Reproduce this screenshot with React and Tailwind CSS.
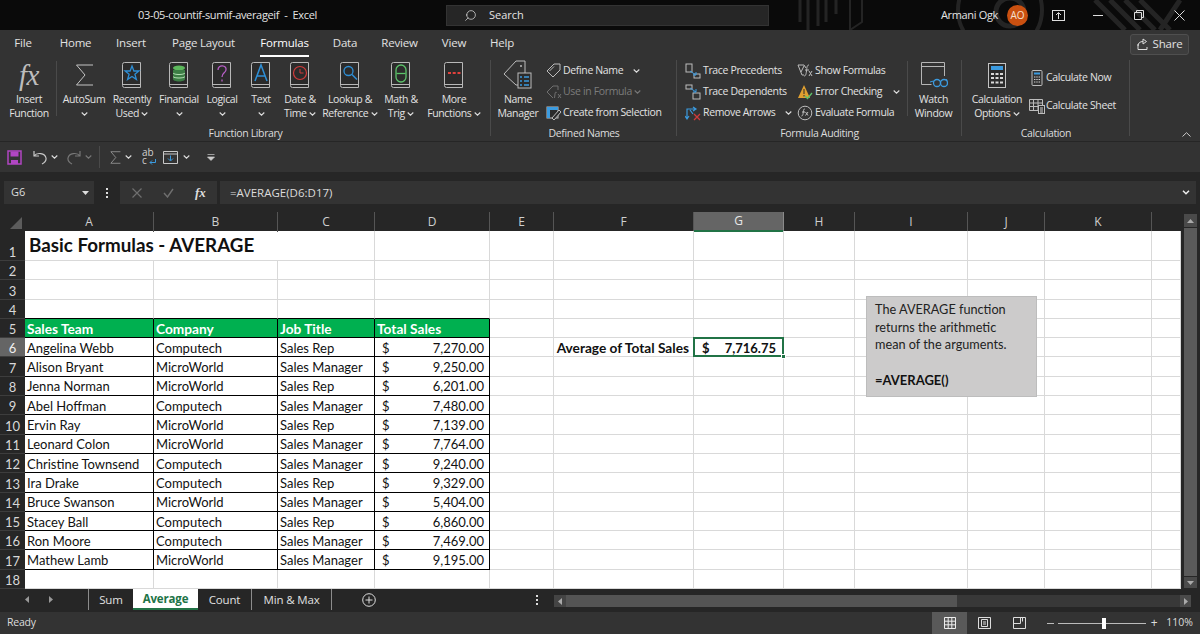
import React from "react";
import { Search } from "lucide-react";

const uiFont = "font-['Open_Sans',sans-serif]";
const cellFont = "font-['Lato',sans-serif]";

const COLUMNS = ["A", "B", "C", "D", "E", "F", "G", "H", "I", "J", "K", ""];

const salesRows = [
  ["Angelina Webb", "Computech", "Sales Rep", "7,270.00"],
  ["Alison Bryant", "MicroWorld", "Sales Manager", "9,250.00"],
  ["Jenna Norman", "MicroWorld", "Sales Rep", "6,201.00"],
  ["Abel Hoffman", "Computech", "Sales Manager", "7,480.00"],
  ["Ervin Ray", "MicroWorld", "Sales Rep", "7,139.00"],
  ["Leonard Colon", "MicroWorld", "Sales Manager", "7,764.00"],
  ["Christine Townsend", "Computech", "Sales Manager", "9,240.00"],
  ["Ira Drake", "Computech", "Sales Rep", "9,329.00"],
  ["Bruce Swanson", "MicroWorld", "Sales Manager", "5,404.00"],
  ["Stacey Ball", "Computech", "Sales Rep", "6,860.00"],
  ["Ron Moore", "Computech", "Sales Manager", "7,469.00"],
  ["Mathew Lamb", "MicroWorld", "Sales Manager", "9,195.00"],
];

const ribbonTabs = [
  ["File", "w-[46px]"],
  ["Home", "w-[59px]"],
  ["Insert", "w-[52px]"],
  ["Page Layout", "w-[93px]"],
  ["Formulas", "w-[69px]"],
  ["Data", "w-[52px]"],
  ["Review", "w-[57px]"],
  ["View", "w-[52px]"],
  ["Help", "w-[44px]"],
];

function Chev({ dim }) {
  return (
    <svg width="7" height="4" viewBox="0 0 7 4" className="inline-block align-middle">
      <path d="M.7.5 3.5 3.2 6.3.5" fill="none" stroke={dim ? "#777" : "#ddd"} strokeWidth="1.1" />
    </svg>
  );
}

function Sigma({ w = 19, h = 22, color = "#c4c4c4" }) {
  return (
    <svg width={w} height={h} viewBox="0 0 19 22">
      <path d="M18 1H1.5L10 11 1.5 21H18" fill="none" stroke={color} strokeWidth="1" />
    </svg>
  );
}

// book shape shared by the function library buttons
function Book({ children }) {
  return (
    <svg width="20" height="26" viewBox="0 0 20 26">
      <path d="M2.5.5h16v25h-16a2 2 0 0 1-2-2v-21a2 2 0 0 1 2-2Z" fill="#2b2b2b" stroke="#b8b8b8" />
      <path d="M1 22.5h17.5" stroke="#b8b8b8" />
      {children}
    </svg>
  );
}

function BigIcon({ name }) {
  if (name === "sum") return <Sigma />;
  if (name === "fx") {
    return <span className="font-['Liberation_Serif',serif] text-[29px] italic leading-[30px] text-[#bdbdbd]">fx</span>;
  }
  if (name === "star") {
    return <Book><path d="m10 4 1.9 5h5l-4 3.2 1.5 5.2L10 14.500 5.600 17.400l1.500-5.200-4-3.200h5z" fill="none" stroke="#2e8fd6" strokeWidth="1.3" /></Book>;
  }
  if (name === "money") {
    return (
      <Book>
        <ellipse cx="10" cy="6" rx="6" ry="2.500" fill="#5cb85c" />
        <path d="M4 8v9c0 1.500 2.700 2.500 6 2.500s6-1 6-2.500V8" fill="#3c7d45" />
        <path d="M4 11c1 2 11 2 12 0M4 14.500c1 2 11 2 12 0" fill="none" stroke="#b5e0b5" />
      </Book>
    );
  }
  if (name === "question") {
    return <Book><path d="M6 8c0-6 9-5 8 0-.5 3-4 3-4 7M10 17.500v2" fill="none" stroke="#b65fc6" strokeWidth="1.300" /></Book>;
  }
  if (name === "a") {
    return <Book><path d="M4 19 10 3l6 16M6 14h8" fill="none" stroke="#2e8fd6" strokeWidth="1.500" /></Book>;
  }
  if (name === "clock") {
    return <Book><circle cx="10" cy="11" r="6.500" fill="none" stroke="#d13b3b" strokeWidth="1.200" /><path d="M10 7v4h3.500" fill="none" stroke="#d13b3b" /></Book>;
  }
  if (name === "lookup") {
    return <Book><circle cx="8.500" cy="9" r="4.500" fill="none" stroke="#2e8fd6" strokeWidth="1.300" /><path d="m12 12.500 5 5" stroke="#2e8fd6" strokeWidth="1.500" /></Book>;
  }
  if (name === "theta") {
    return <Book><rect x="5" y="3" width="10" height="17" rx="5" fill="none" stroke="#5cc26a" strokeWidth="1.300" /><path d="M5.500 11.500h9" stroke="#5cc26a" strokeWidth="1.300" /></Book>;
  }
  if (name === "dots") {
    return <Book><path d="M4 11h3M8.700 11h3M13.500 11h3" stroke="#e0413c" strokeWidth="2" /></Book>;
  }
  if (name === "name") {
    return (
      <svg width="30" height="30" viewBox="0 0 30 30">
        <path d="M1 14 13 1h9v24h-9Z" fill="none" stroke="#bdbdbd" />
        <circle cx="18" cy="6" r="1" fill="#bdbdbd" />
        <rect x="15" y="13" width="13" height="15" fill="#2b2b2b" stroke="#bdbdbd" />
        <path d="M17 17h2M21 17h5M17 21h2M21 21h5M17 25h2M21 25h5" stroke="#3b9be0" strokeWidth="1.500" />
      </svg>
    );
  }
  if (name === "watch") {
    return (
      <svg width="28" height="28" viewBox="0 0 28 28">
        <path d="M24.500 15V1.500h-23v22h10M1.500 5.500h23" fill="none" stroke="#b5b5b5" />
        <circle cx="17" cy="22" r="3.500" fill="none" stroke="#3b9be0" strokeWidth="1.300" />
        <circle cx="24" cy="22" r="3.500" fill="none" stroke="#3b9be0" strokeWidth="1.300" />
        <path d="M10 21l3.500-1M27 20l-.5-2" stroke="#3b9be0" />
      </svg>
    );
  }
  if (name === "calc") {
    return (
      <svg width="18" height="25" viewBox="0 0 18 25">
        <rect x=".5" y=".5" width="17" height="24" fill="#2b2b2b" stroke="#c4c4c4" />
        <rect x="3" y="3" width="12" height="4" fill="#3b9be0" />
        <path d="M3 11h3M7.500 11h3M12 11h3M3 15h3M7.500 15h3M12 15h3M3 19.500h3M7.500 19.500h3M12 19.500h3" stroke="#d8d8d8" strokeWidth="2" />
      </svg>
    );
  }
  return null;
}

function SmallIcon({ name }) {
  const line = "#bdbdbd";
  const blue = "#3b9be0";
  const parts = {
    tag: <path d="M1 8 8 1h6v6l-7 7ZM3.500 8 8 3.500" fill="none" stroke={line} />,
    tagDim: (
      <>
        <path d="M1 8 7 2h5v4M1 8l6 6" fill="none" stroke="#707070" />
        <path d="M10 9c1-1.500-1-1.500-1 1l-.5 4M12 10l3 4m0-4-3 4" fill="none" stroke="#707070" />
      </>
    ),
    create: (
      <>
        <rect x="1" y="2" width="11" height="11" fill="#2b2b2b" stroke={line} />
        <path d="M1 2h11v3H1zM1 5h3v8H1z" fill={blue} />
        <path d="M6 13l7-8 2 2-7 8Z" fill="#2b2b2b" stroke={line} />
      </>
    ),
    prec: (
      <>
        <rect x="1" y="1" width="6" height="8" fill="none" stroke={line} />
        <rect x="9" y="11" width="6" height="4" fill="none" stroke={line} />
        <path d="M5 8l6 4M11 9v3H8" fill="none" stroke={blue} />
      </>
    ),
    dep: (
      <>
        <rect x="1" y="1" width="6" height="4" fill="none" stroke={line} />
        <rect x="8" y="9" width="7" height="6" fill="none" stroke={line} />
        <path d="M5 4l6 4M11 5v3H8" fill="none" stroke={blue} />
      </>
    ),
    arrows: (
      <>
        <path d="M2 14V4h8M8 2l3 2-3 2M0 11l2 3 2-3M5 5l3 4" fill="none" stroke={blue} strokeWidth="1.200" />
        <path d="m9 9 6 6m0-6-6 6" stroke="#d13b3b" strokeWidth="1.300" />
      </>
    ),
    show: (
      <>
        <path d="M1 2h6l2 3M1 2l4 10h2M7 3 4 9" fill="none" stroke={line} />
        <path d="M12 2c-2 0-2 2-2.500 6-.5 4-1 5-2.500 5M8 7h4M12 8l3 5m0-5-3 5" fill="none" stroke={line} />
      </>
    ),
    error: (
      <>
        <path d="M7 1 1 14h12Z" fill="#e0a030" />
        <path d="M7 5v5M7 11v1.500" stroke="#2b2b2b" />
        <path d="m8 12 2.500 2.500L15 9" fill="none" stroke="#5cc26a" strokeWidth="1.300" />
      </>
    ),
    evaluate: (
      <>
        <circle cx="8" cy="8" r="6.800" fill="none" stroke={line} />
        <path d="M8 4c-1-.5-1.500 1-1.700 3-.2 2-.5 4-1.800 4M5 7h3M8.500 7l2.500 3.500m0-3.500-2.500 3.500" fill="none" stroke={line} />
      </>
    ),
    calcNow: (
      <>
        <rect x="3" y=".5" width="10" height="15" rx="1" fill="none" stroke={line} />
        <rect x="5" y="2.500" width="6" height="2" fill={blue} />
        <path d="M5 7h6M5 9.500h6M5 12h6" stroke="#d0d0d0" strokeDasharray="1.400 .9" />
      </>
    ),
    calcSheet: (
      <>
        <path d="M.5 1.500h13v11H.5ZM.5 5h13M.5 8.500h13M4.500 1.500v11M9 1.500v11" fill="none" stroke={line} />
        <rect x="9.500" y="7.500" width="6" height="8" fill="#2b2b2b" stroke={line} />
        <path d="M11 10h3M11 12h3M11 14h3" stroke="#d0d0d0" />
      </>
    ),
  };
  return (
    <svg width="16" height="16" viewBox="0 0 16 16" className="shrink-0">
      {parts[name]}
    </svg>
  );
}

function BigButton({ icon, lines, width }) {
  return (
    <div className={`flex h-full shrink-0 flex-col items-center text-center ${width}`}>
      <div className="flex h-[34px] items-center justify-center">
        <BigIcon name={icon} />
      </div>
      <div className="whitespace-nowrap leading-[14px]">{lines[0]}</div>
      <div className="whitespace-nowrap leading-[14px]">
        {lines[1]} {lines[2] && <Chev />}
      </div>
    </div>
  );
}

function SmallButton({ icon, label, dim, chev, tight }) {
  return (
    <div className={`flex h-[21px] items-center whitespace-nowrap ${tight ? "gap-[1px]" : "gap-[2px]"} ${dim ? "text-[#7c7c7c]" : ""}`}>
      <SmallIcon name={icon} />
      <span>{label}</span>
      {chev}
    </div>
  );
}

function Group({ label, width, children, last }) {
  return (
    <div className={`relative flex h-full shrink-0 flex-col ${width}`}>
      <div className="flex h-[68px]">{children}</div>
      <div className="text-center leading-[14px] text-[#dcdcdc]">{label}</div>
      {!last && <span className="absolute bottom-[5px] right-0 top-[2px] w-px bg-[#4a4a4a]" />}
    </div>
  );
}

function VSep() {
  return <div className="mt-[3px] h-[55px] w-px shrink-0 bg-[#4a4a4a]" />;
}

function Ribbon() {
  return (
    <div className={`flex h-[83px] bg-[#333333] text-[10.500px] tracking-[-0.35px] text-[#e2e2e2] ${uiFont}`}>
      <Group label="Function Library" width="w-[491px]">
        <BigButton icon="fx" lines={["Insert", "Function"]} width="w-[56px] pl-[2px]" />
        <VSep />
        <div className="w-[3px] shrink-0" />
        <BigButton icon="sum" lines={["AutoSum", <Chev key="c" />]} width="w-[48px]" />
        <BigButton icon="star" lines={["Recently", "Used", true]} width="w-[48px]" />
        <BigButton icon="money" lines={["Financial", <Chev key="c" />]} width="w-[46px]" />
        <BigButton icon="question" lines={["Logical", <Chev key="c" />]} width="w-[40px]" />
        <BigButton icon="a" lines={["Text", <Chev key="c" />]} width="w-[38px]" />
        <BigButton icon="clock" lines={["Date &", "Time", true]} width="w-[40px]" />
        <BigButton icon="lookup" lines={["Lookup &", "Reference", true]} width="w-[60px]" />
        <BigButton icon="theta" lines={["Math &", "Trig", true]} width="w-[42px]" />
        <BigButton icon="dots" lines={["More", "Functions", true]} width="w-[64px]" />
      </Group>

      <Group label="Defined Names" width="w-[186px]">
        <BigButton icon="name" lines={["Name", "Manager"]} width="w-[56px] -ml-[1px]" />
        <div className="flex flex-col pt-[2px]">
          <SmallButton tight icon="tag" label="Define Name" chev={<span className="ml-[9px]"><Chev /></span>} />
          <SmallButton tight icon="tagDim" label="Use in Formula" dim chev={<span className="ml-[1px]"><Chev dim /></span>} />
          <SmallButton tight icon="create" label="Create from Selection" />
        </div>
      </Group>

      <Group label="Formula Auditing" width="w-[285px]">
        <div className="flex w-[230px] shrink-0 pl-[8px]">
          <div className="flex w-[112px] shrink-0 flex-col pt-[2px]">
            <SmallButton icon="prec" label="Trace Precedents" />
            <SmallButton icon="dep" label="Trace Dependents" />
            <SmallButton icon="arrows" label="Remove Arrows" chev={<span className="ml-[8px]"><Chev /></span>} />
          </div>
          <div className="flex flex-col pt-[2px]">
            <SmallButton icon="show" label="Show Formulas" />
            <SmallButton icon="error" label="Error Checking" chev={<span className="ml-[9px]"><Chev /></span>} />
            <SmallButton icon="evaluate" label="Evaluate Formula" />
          </div>
        </div>
        <VSep />
        <BigButton icon="watch" lines={["Watch", "Window"]} width="w-[51px]" />
      </Group>

      <Group label="Calculation" width="w-[168px]">
        <BigButton icon="calc" lines={["Calculation", "Options", true]} width="w-[64px] ml-[3px]" />
        <div className="flex flex-col gap-[7px] pt-[9px]">
          <SmallButton tight icon="calcNow" label="Calculate Now" />
          <SmallButton tight icon="calcSheet" label="Calculate Sheet" />
        </div>
      </Group>

      <div className="flex flex-1 items-end justify-end pb-[4px] pr-[9px]">
        <svg width="9" height="5" viewBox="0 0 9 5">
          <path d="M.5 4.500 4.500.7l4 3.800" fill="none" stroke="#ccc" />
        </svg>
      </div>
    </div>
  );
}

function TitleBar() {
  return (
    <div className={`relative flex h-[30px] items-center overflow-hidden bg-[#0a0a0a] text-[11px] text-[#e4e4e4] ${uiFont}`}>
      {/* faint office theme pattern */}
      <svg className="absolute left-[690px] top-0" width="510" height="30" viewBox="0 0 510 30">
        <g fill="none" stroke="#242424">
          <path d="M110 0v22M118 0v30M128 0v26M136 0v22M146 0v14" strokeWidth="3" />
          <path d="M160 0v30l12-8V0" strokeWidth="2" />
          <circle cx="320" cy="12" r="14" strokeWidth="5" />
          <circle cx="310" cy="10" r="42" strokeWidth="4" />
          <path d="M405 0l30 30M420 0l30 30M435 0l30 30M450 0l30 30M470 30l20-30" strokeWidth="5" />
        </g>
      </svg>
      <div className="relative ml-[138px] w-[308px] whitespace-pre tracking-[-0.33px]">03-05-countif-sumif-averageif  -  Excel</div>
      <div className="relative flex h-[21px] w-[323px] items-center border border-[#333] bg-[#262626] pl-[17px]">
        <Search size={13} strokeWidth={1.300} className="-scale-x-100" />
        <span className="ml-[12px]">Search</span>
      </div>
      <div className="relative ml-[172px] w-[66px] whitespace-nowrap tracking-[-0.35px]">Armani Ogk</div>
      <div className="relative flex h-[21px] w-[21px] items-center justify-center rounded-full bg-[#ca5010] text-[10px] text-[#f5e0d0]">AO</div>
      <div className="relative ml-[17px] flex w-[26px] justify-center">
        <svg width="13" height="11" viewBox="0 0 13 11">
          <rect x=".5" y=".5" width="12" height="10" fill="none" stroke="#ddd" />
          <path d="M6.500 9V3M4 5l2.500-2.500L9 5" fill="none" stroke="#ddd" />
        </svg>
      </div>
      <div className="relative ml-[22px] h-px w-[10px] bg-[#ddd]" />
      <div className="relative ml-[31px]">
        <svg width="10" height="10" viewBox="0 0 10 10">
          <path d="M.5 2.500h7v7h-7zM2.500 2.500v-2h7v7h-2" fill="none" stroke="#ddd" />
        </svg>
      </div>
      <div className="relative ml-[30px]">
        <svg width="11" height="11" viewBox="0 0 11 11">
          <path d="m.5.5 10 10m0-10-10 10" stroke="#ddd" />
        </svg>
      </div>
    </div>
  );
}

function TabRow() {
  return (
    <div className={`flex h-[28px] items-center bg-[#333333] text-[11.500px] tracking-[-0.2px] text-[#e2e2e2] ${uiFont}`}>
      {ribbonTabs.map(([label, width]) => (
        <div key={label} className={`relative flex h-full items-center justify-center pb-[2px] ${width}`}>
          {label === "Formulas" ? (
            <span className="relative font-medium text-white">
              {label}
              <span className="absolute -bottom-[5px] left-0 h-[2px] w-full bg-white" />
            </span>
          ) : (
            label
          )}
        </div>
      ))}
      <div className="ml-auto mr-[11px] flex h-[21px] w-[59px] items-center justify-center gap-[4px] rounded-[3px] border border-[#4f4f4f] bg-[#3d3d3d]">
        <svg width="12" height="12" viewBox="0 0 12 12">
          <path d="M1 6v5.500h9V9M1 8c0-3 2-4.500 5-4.500M6 1l3.500 2.500L6 6Z" fill="none" stroke="#ddd" />
        </svg>
        <span>Share</span>
      </div>
    </div>
  );
}

function QuickAccess() {
  return (
    <div className="flex h-[31px] items-center border-t border-[#262626] bg-[#333333]">
      <svg width="15" height="15" viewBox="0 0 15 15" className="ml-[7px]">
        <path d="M1 1h13v13H1Z" fill="none" stroke="#b146c2" strokeWidth="1.500" />
        <path d="M3.500 1.500h8v5h-8ZM4 14v-4h7v4" fill="#b146c2" />
      </svg>
      <svg width="14" height="15" viewBox="0 0 14 15" className="ml-[11px]">
        <path d="M1 1v5h5M1 6c3-4 11-3 12 2 .5 3-2 5-4 6" fill="none" stroke="#c8c8c8" strokeWidth="1.200" />
      </svg>
      <span className="ml-[4px] flex"><Chev /></span>
      <svg width="14" height="15" viewBox="0 0 14 15" className="ml-[9px]">
        <path d="M13 1v5H8M13 6c-3-4-11-3-12 2-.5 3 2 5 4 6" fill="none" stroke="#777" strokeWidth="1.200" />
      </svg>
      <span className="ml-[4px] flex"><Chev dim /></span>
      <div className="ml-[7px] h-[22px] w-px bg-[#4a4a4a]" />
      <span className="ml-[10px] flex"><Sigma w={11} h={13} /></span>
      <span className="ml-[4px] flex"><Chev /></span>
      {/* one word that wraps after "ab", as on the spelling button */}
      <div className={`relative ml-[10px] h-[18px] w-[14px] break-all text-[10px] leading-[8px] text-[#d0d0d0] ${uiFont}`}>
        abc
        <svg width="7" height="6" viewBox="0 0 7 6" className="absolute bottom-[1px] right-0">
          <path d="M6.500 0v3.500H1M3 1.500 1 3.500l2 2" fill="none" stroke="#3b9be0" />
        </svg>
      </div>
      <svg width="15" height="13" viewBox="0 0 15 13" className="ml-[7px]">
        <path d="M.5.5h14v12H.5ZM.5 3h14" fill="none" stroke="#c8c8c8" />
        <path d="M7.500 4.500v5M5 7.500 7.500 10 10 7.500" fill="none" stroke="#3b9be0" />
      </svg>
      <span className="ml-[5px] flex"><Chev /></span>
      <svg width="8" height="7" viewBox="0 0 8 7" className="ml-[17px]">
        <path d="M.5.500h7M.5 3l3.500 3.500L7.500 3Z" fill="#ccc" stroke="#ccc" strokeWidth=".7" />
      </svg>
    </div>
  );
}

function FormulaBar() {
  return (
    <div className={`flex h-[40px] items-start bg-[#262626] pt-[9px] text-[#dcdcdc] ${uiFont}`}>
      <div className="ml-[4px] flex h-[23px] w-[90px] items-center justify-between bg-[#333333] pl-[7px] pr-[5px] text-[11px]">
        <span>G6</span>
        <svg width="7" height="4" viewBox="0 0 7 4"><path d="M0 0h7L3.500 4Z" fill="#ddd" /></svg>
      </div>
      <div className="flex h-[23px] w-[26px] flex-col items-center justify-center gap-[2px]">
        <span className="h-[2px] w-[2px] bg-[#ddd]" />
        <span className="h-[2px] w-[2px] bg-[#ddd]" />
        <span className="h-[2px] w-[2px] bg-[#ddd]" />
      </div>
      <div className="flex h-[23px] w-[97px] items-center bg-[#333333]">
        <svg width="10" height="10" viewBox="0 0 10 10" className="ml-[12px]">
          <path d="m.5.5 9 9m0-9-9 9" stroke="#6f6f6f" strokeWidth="1.200" />
        </svg>
        <svg width="11" height="10" viewBox="0 0 11 10" className="ml-[21px]">
          <path d="m1 5 3.500 4L10 1" fill="none" stroke="#6f6f6f" strokeWidth="1.400" />
        </svg>
        <span className="ml-[21px] font-['Liberation_Serif',serif] text-[13px] font-bold italic text-[#ddd]">fx</span>
      </div>
      <div className="ml-[3px] mr-[4px] flex h-[23px] flex-1 items-center justify-between bg-[#333333] pl-[10px] pr-[6px] text-[11.500px]">
        <span>=AVERAGE(D6:D17)</span>
        <svg width="8" height="5" viewBox="0 0 8 5"><path d="m1 .8 3 3 3-3" fill="none" stroke="#eee" strokeWidth="1.500" /></svg>
      </div>
    </div>
  );
}

function RowHead({ n, active }) {
  return (
    <div className={`flex items-end justify-center border-b border-[#3d3d3d] text-[13px] leading-[16px] ${active ? "bg-[#656565] text-[#f0f0f0]" : "bg-[#262626] text-[#d8d8d8]"} ${cellFont}`}>
      {n}
    </div>
  );
}

// boxed = black table border, otherwise the light sheet gridline
function Cell({ children, boxed, strong, className = "" }) {
  return (
    <div className={`flex items-center whitespace-nowrap border-b border-r pl-[2px] pt-[2px] leading-none ${strong ? "text-[13.700px] font-bold" : "text-[13px]"} ${boxed ? "border-black" : "border-[#d9d9d9]"} ${className}`}>
      {children}
    </div>
  );
}

function EmptyCells({ from }) {
  return Array.from({ length: 12 - from }, (_, i) => <Cell key={i} />);
}

function Sheet() {
  const heads = ["Sales Team", "Company", "Job Title", "Total Sales"];
  return (
    <div className={`relative ${cellFont}`}>
      {/* column headers */}
      <div className="grid h-[19px] grid-cols-[25px_129px_124px_97px_115px_64px_140px_90px_71px_113px_77px_107px_29px] bg-[#262626] text-[12px] text-[#cfcfcf]">
        <div className="flex items-end justify-end pb-[3px] pr-[3px]">
          <svg width="12" height="12" viewBox="0 0 12 12"><path d="M12 0v12H0Z" fill="#5c5c5c" /></svg>
        </div>
        {COLUMNS.map((c) => (
          <div
            key={c}
            className={`flex items-center justify-center ${uiFont} ${
              c === "G"
                ? "border-b-2 border-r border-[#217346] border-r-[#8a8a8a] bg-[#656565] text-[#e8e8e8]"
                : c === ""
                  ? ""
                  : "border-r border-[#555]"
            }`}
          >
            {c}
          </div>
        ))}
      </div>

      {/* cells */}
      <div className="grid grid-cols-[25px_129px_124px_97px_115px_64px_140px_90px_71px_113px_77px_107px_29px] grid-rows-[30px_repeat(17,19.300px)] bg-white text-[#111]">
        <RowHead n={1} />
        <div className="col-span-3 flex items-center whitespace-nowrap border-b border-r border-[#d9d9d9] pl-[4px] text-[18.800px] font-bold">
          Basic Formulas - AVERAGE
        </div>
        <EmptyCells from={3} />

        {[2, 3].map((n) => (
          <React.Fragment key={n}>
            <RowHead n={n} />
            <EmptyCells from={0} />
          </React.Fragment>
        ))}

        <RowHead n={4} />
        {[0, 1, 2, 3].map((i) => <Cell key={i} className="border-b-black" />)}
        <EmptyCells from={4} />

        <RowHead n={5} />
        {heads.map((h) => (
          <Cell key={h} boxed strong className="bg-[#00b050] text-white">{h}</Cell>
        ))}
        <EmptyCells from={4} />

        {salesRows.map((row, i) => {
          const n = i + 6;
          return (
            <React.Fragment key={n}>
              <RowHead n={n} active={n === 6} />
              <Cell boxed>{row[0]}</Cell>
              <Cell boxed>{row[1]}</Cell>
              <Cell boxed>{row[2]}</Cell>
              <Cell boxed className="justify-between pl-[7px] pr-[5px]">
                <span>$</span>
                <span>{row[3]}</span>
              </Cell>
              {n === 6 ? (
                <>
                  <Cell />
                  <Cell strong className="justify-end pr-[4px]">Average of Total Sales</Cell>
                  <Cell className="relative justify-between pl-[8px] pr-[7px] font-bold">
                    <span>$</span>
                    <span>7,716.75</span>
                    <span className="absolute -left-px -top-px bottom-[-1px] right-[-1px] border-2 border-[#217346]" />
                    <span className="absolute -bottom-[3px] -right-[3px] h-[5px] w-[5px] border border-white bg-[#217346]" />
                  </Cell>
                  <Cell />
                  <Cell />
                  <Cell />
                  <Cell />
                  <Cell />
                </>
              ) : (
                <EmptyCells from={4} />
              )}
            </React.Fragment>
          );
        })}

        <RowHead n={18} />
        <EmptyCells from={0} />
      </div>

      {/* text box floating over the sheet */}
      <div className="absolute left-[866px] top-[84px] h-[101px] w-[171px] border border-[#bdbdbd] bg-[#cccbcb] pl-[8px] pt-[4px] text-[12.700px] leading-[17.500px] text-[#222]">
        <div>The AVERAGE function</div>
        <div>returns the arithmetic</div>
        <div>mean of the arguments.</div>
        <div className="mt-[18px] text-[13px] font-bold text-[#111]">=AVERAGE()</div>
      </div>
    </div>
  );
}

function ScrollBar() {
  return (
    <div className="flex w-[19px] shrink-0 flex-col items-center gap-px bg-[#262626] pt-[2px]">
      <div className="flex h-[13px] w-[13px] items-center justify-center bg-[#4a4a4a]">
        <svg width="7" height="4" viewBox="0 0 7 4"><path d="M0 4h7L3.500 0Z" fill="#aaa" /></svg>
      </div>
      <div className="w-[13px] flex-1 bg-[#5a5a5a]" />
      <div className="mb-px flex h-[11px] w-[13px] items-center justify-center bg-[#4a4a4a]">
        <svg width="7" height="4" viewBox="0 0 7 4"><path d="M0 0h7L3.500 4Z" fill="#aaa" /></svg>
      </div>
    </div>
  );
}

function SheetTabs() {
  return (
    <div className={`flex h-[23px] bg-[#262626] text-[11.500px] tracking-[-0.15px] text-[#e0e0e0] ${uiFont}`}>
      <div className="flex w-[88px] items-center pb-[2px] pl-[25px]">
        <svg width="4" height="7" viewBox="0 0 4 7"><path d="M4 0v7L0 3.500Z" fill="#999" /></svg>
        <svg width="4" height="7" viewBox="0 0 4 7" className="ml-[20px]"><path d="M0 0v7l4-3.500Z" fill="#999" /></svg>
      </div>
      <div className="flex h-[21px] w-[45px] items-center justify-center border-l border-[#8c8c8c]">Sum</div>
      <div className="flex h-[21px] w-[65px] items-center justify-center border-b-2 border-[#217346] bg-white font-bold text-[#217346]">Average</div>
      <div className="flex h-[21px] w-[54px] items-center justify-center border-r border-[#8c8c8c]">Count</div>
      <div className="flex h-[21px] w-[80px] items-center justify-center border-r border-[#8c8c8c]">Min &amp; Max</div>
      <div className="flex h-[21px] items-center pl-[30px]">
        <svg width="14" height="14" viewBox="0 0 14 14">
          <circle cx="7" cy="7" r="6.300" fill="none" stroke="#ddd" />
          <path d="M7 3.500v7M3.500 7h7" stroke="#ddd" />
        </svg>
      </div>
      <div className="ml-[156px] flex h-[21px] w-[10px] flex-col items-center justify-center gap-[2px]">
        <span className="h-[2px] w-[2px] bg-[#ddd]" />
        <span className="h-[2px] w-[2px] bg-[#ddd]" />
        <span className="h-[2px] w-[2px] bg-[#ddd]" />
      </div>
      <div className="ml-[12px] mt-[6px] flex h-[12px] w-[637px] bg-[#383838]">
        <div className="flex w-[12px] items-center justify-center bg-[#444]">
          <svg width="4" height="7" viewBox="0 0 4 7"><path d="M4 0v7L0 3.500Z" fill="#aaa" /></svg>
        </div>
        <div className="w-[391px] bg-[#545454]" />
        <div className="ml-auto flex w-[11px] items-center justify-center bg-[#4a4a4a]">
          <svg width="4" height="7" viewBox="0 0 4 7"><path d="M0 0v7l4-3.500Z" fill="#aaa" /></svg>
        </div>
      </div>
    </div>
  );
}

function StatusBar() {
  return (
    <div className={`flex h-[22px] items-center bg-[#333333] text-[10.500px] text-[#dcdcdc] ${uiFont}`}>
      <span className="ml-[7px] tracking-[-0.2px]">Ready</span>
      <div className="ml-auto flex h-full w-[35px] items-center justify-center bg-[#595959]">
        <svg width="12" height="12" viewBox="0 0 12 12">
          <path d="M.5.5h11v11H.5ZM4.200.5v11M7.800.5v11M.5 4.200h11M.5 7.800h11" fill="none" stroke="#eee" />
        </svg>
      </div>
      <div className="flex w-[35px] justify-center">
        <svg width="13" height="12" viewBox="0 0 13 12">
          <path d="M.5.5h12v11H.5ZM3.500 2.500h6v7h-6ZM5 5h3M5 7h3" fill="none" stroke="#ddd" />
        </svg>
      </div>
      <div className="flex w-[35px] justify-center">
        <svg width="13" height="12" viewBox="0 0 13 12">
          <path d="M.5.5h12v11H.5ZM.5 6.500h7v-6M9.500.5v4" fill="none" stroke="#ddd" />
        </svg>
      </div>
      <div className="ml-[10px] h-px w-[7px] bg-[#bbb]" />
      <div className="relative ml-[4px] h-px w-[88px] bg-[#bbb]">
        <span className="absolute -top-[5px] left-[44px] h-[11px] w-[4px] bg-white" />
      </div>
      <span className="ml-[4px] w-[8px] text-center text-[12px] leading-none">+</span>
      <span className="ml-[8px] mr-[7px]">110%</span>
    </div>
  );
}

export default function App() {
  return (
    <div className="flex h-[634px] w-[1200px] flex-col overflow-hidden bg-[#262626]">
      <TitleBar />
      <TabRow />
      <Ribbon />
      <QuickAccess />
      <FormulaBar />
      <div className="flex h-[377px]">
        <div className="w-[1181px] shrink-0">
          <Sheet />
        </div>
        <ScrollBar />
      </div>
      <SheetTabs />
      <StatusBar />
    </div>
  );
}
